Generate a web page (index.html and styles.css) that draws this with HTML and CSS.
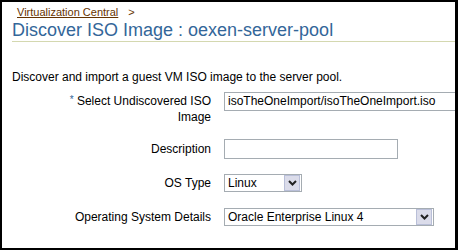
FILE: index.html
```html
<!DOCTYPE html>
<html lang="en">
<head>
    <meta charset="UTF-8">
    <title>Discover ISO Image : oexen-server-pool</title>
    <link rel="stylesheet" href="styles.css">
</head>
<body>
    <div class="frame">
        <div class="crumbs">
            <a href="#" class="crumb-link">Virtualization Central</a>
            <span class="crumb-sep">&gt;</span>
        </div>
        <h1 class="page-title">Discover ISO Image : oexen-server-pool</h1>

        <p class="intro">Discover and import a guest VM ISO image to the server pool.</p>

        <div class="form-grid">
            <label class="field-label required"><span class="star">*</span> Select Undiscovered ISO Image</label>
            <div class="field top"><input type="text" class="text-input wide" value="isoTheOneImport/isoTheOneImport.iso"></div>

            <label class="field-label">Description</label>
            <div class="field"><input type="text" class="text-input desc" value=""></div>

            <label class="field-label">OS Type</label>
            <div class="field">
                <div class="fake-select os-type">
                    <span class="sel-text">Linux</span>
                    <span class="sel-btn">
                        <svg width="9" height="6" viewBox="0 0 9 6"><path d="M1 1 L4.5 4.5 L8 1" fill="none" stroke="#222" stroke-width="2"/></svg>
                    </span>
                </div>
            </div>

            <label class="field-label">Operating System Details</label>
            <div class="field">
                <div class="fake-select os-details">
                    <span class="sel-text">Oracle Enterprise Linux 4</span>
                    <span class="sel-btn">
                        <svg width="9" height="6" viewBox="0 0 9 6"><path d="M1 1 L4.5 4.5 L8 1" fill="none" stroke="#222" stroke-width="2"/></svg>
                    </span>
                </div>
            </div>
        </div>
    </div>
</body>
</html>
```

FILE: styles.css
```css
html, body {
    margin: 0;
    padding: 0;
    background: #000;
}
body {
    font-family: 'Liberation Sans', Arial, sans-serif;
    font-size: 12px;
    color: #000;
}
.frame {
    background: #fff;
    width: 453px;
    height: 246px;
    margin: 2px 3px 2px 2px;
    overflow: hidden;
}
.crumbs {
    padding: 3px 0 0 15px;
    height: 14px;
    line-height: 14px;
    font-size: 11px;
}
.crumb-link {
    color: #663300;
    text-decoration: underline;
}
.crumb-sep {
    color: #663300;
    margin-left: 7px;
}
.page-title {
    margin: 0 0 0 10px;
    padding: 2px 0 2px 0;
    font-weight: normal;
    font-size: 18px;
    line-height: 18px;
    color: #336699;
    border-bottom: 1px solid #d4d8b0;
}
.intro {
    margin: 28px 0 0 10px;
    line-height: 14px;
}
.form-grid {
    display: grid;
    grid-template-columns: 209px 1fr;
    column-gap: 13px;
    row-gap: 14px;
    margin-top: 8px;
    align-items: center;
}
.field-label {
    text-align: right;
    line-height: 16px;
}
.field-label.required {
    padding-left: 40px;
    align-self: start;
}
.star {
    color: #336699;
    font-size: 10px;
    vertical-align: 2px;
}
.field {
    display: flex;
    align-items: center;
    min-height: 20px;
}
.field.top {
    align-self: start;
    margin-top: -1px;
}
.text-input {
    font-family: 'Liberation Sans', Arial, sans-serif;
    font-size: 12px;
    border: 1px solid #a5acb2;
    padding: 0 3px;
    height: 19px;
    box-sizing: border-box;
    margin: 0;
    outline: none;
}
.text-input.wide {
    width: 240px;
}
.text-input.desc {
    width: 174px;
    height: 20px;
}
.fake-select {
    display: flex;
    align-items: center;
    border: 1px solid #a5acb2;
    height: 18px;
    box-sizing: border-box;
    background: #fff;
}
.sel-text {
    flex: 1;
    padding-left: 3px;
    line-height: 16px;
}
.sel-btn {
    width: 16px;
    height: 16px;
    margin-right: 1px;
    box-sizing: border-box;
    border: 1px solid #b9bfd8;
    background: #dbdcea;
    display: flex;
    align-items: center;
    justify-content: center;
}
.os-type {
    width: 78px;
}
.os-details {
    width: 210px;
}
```
